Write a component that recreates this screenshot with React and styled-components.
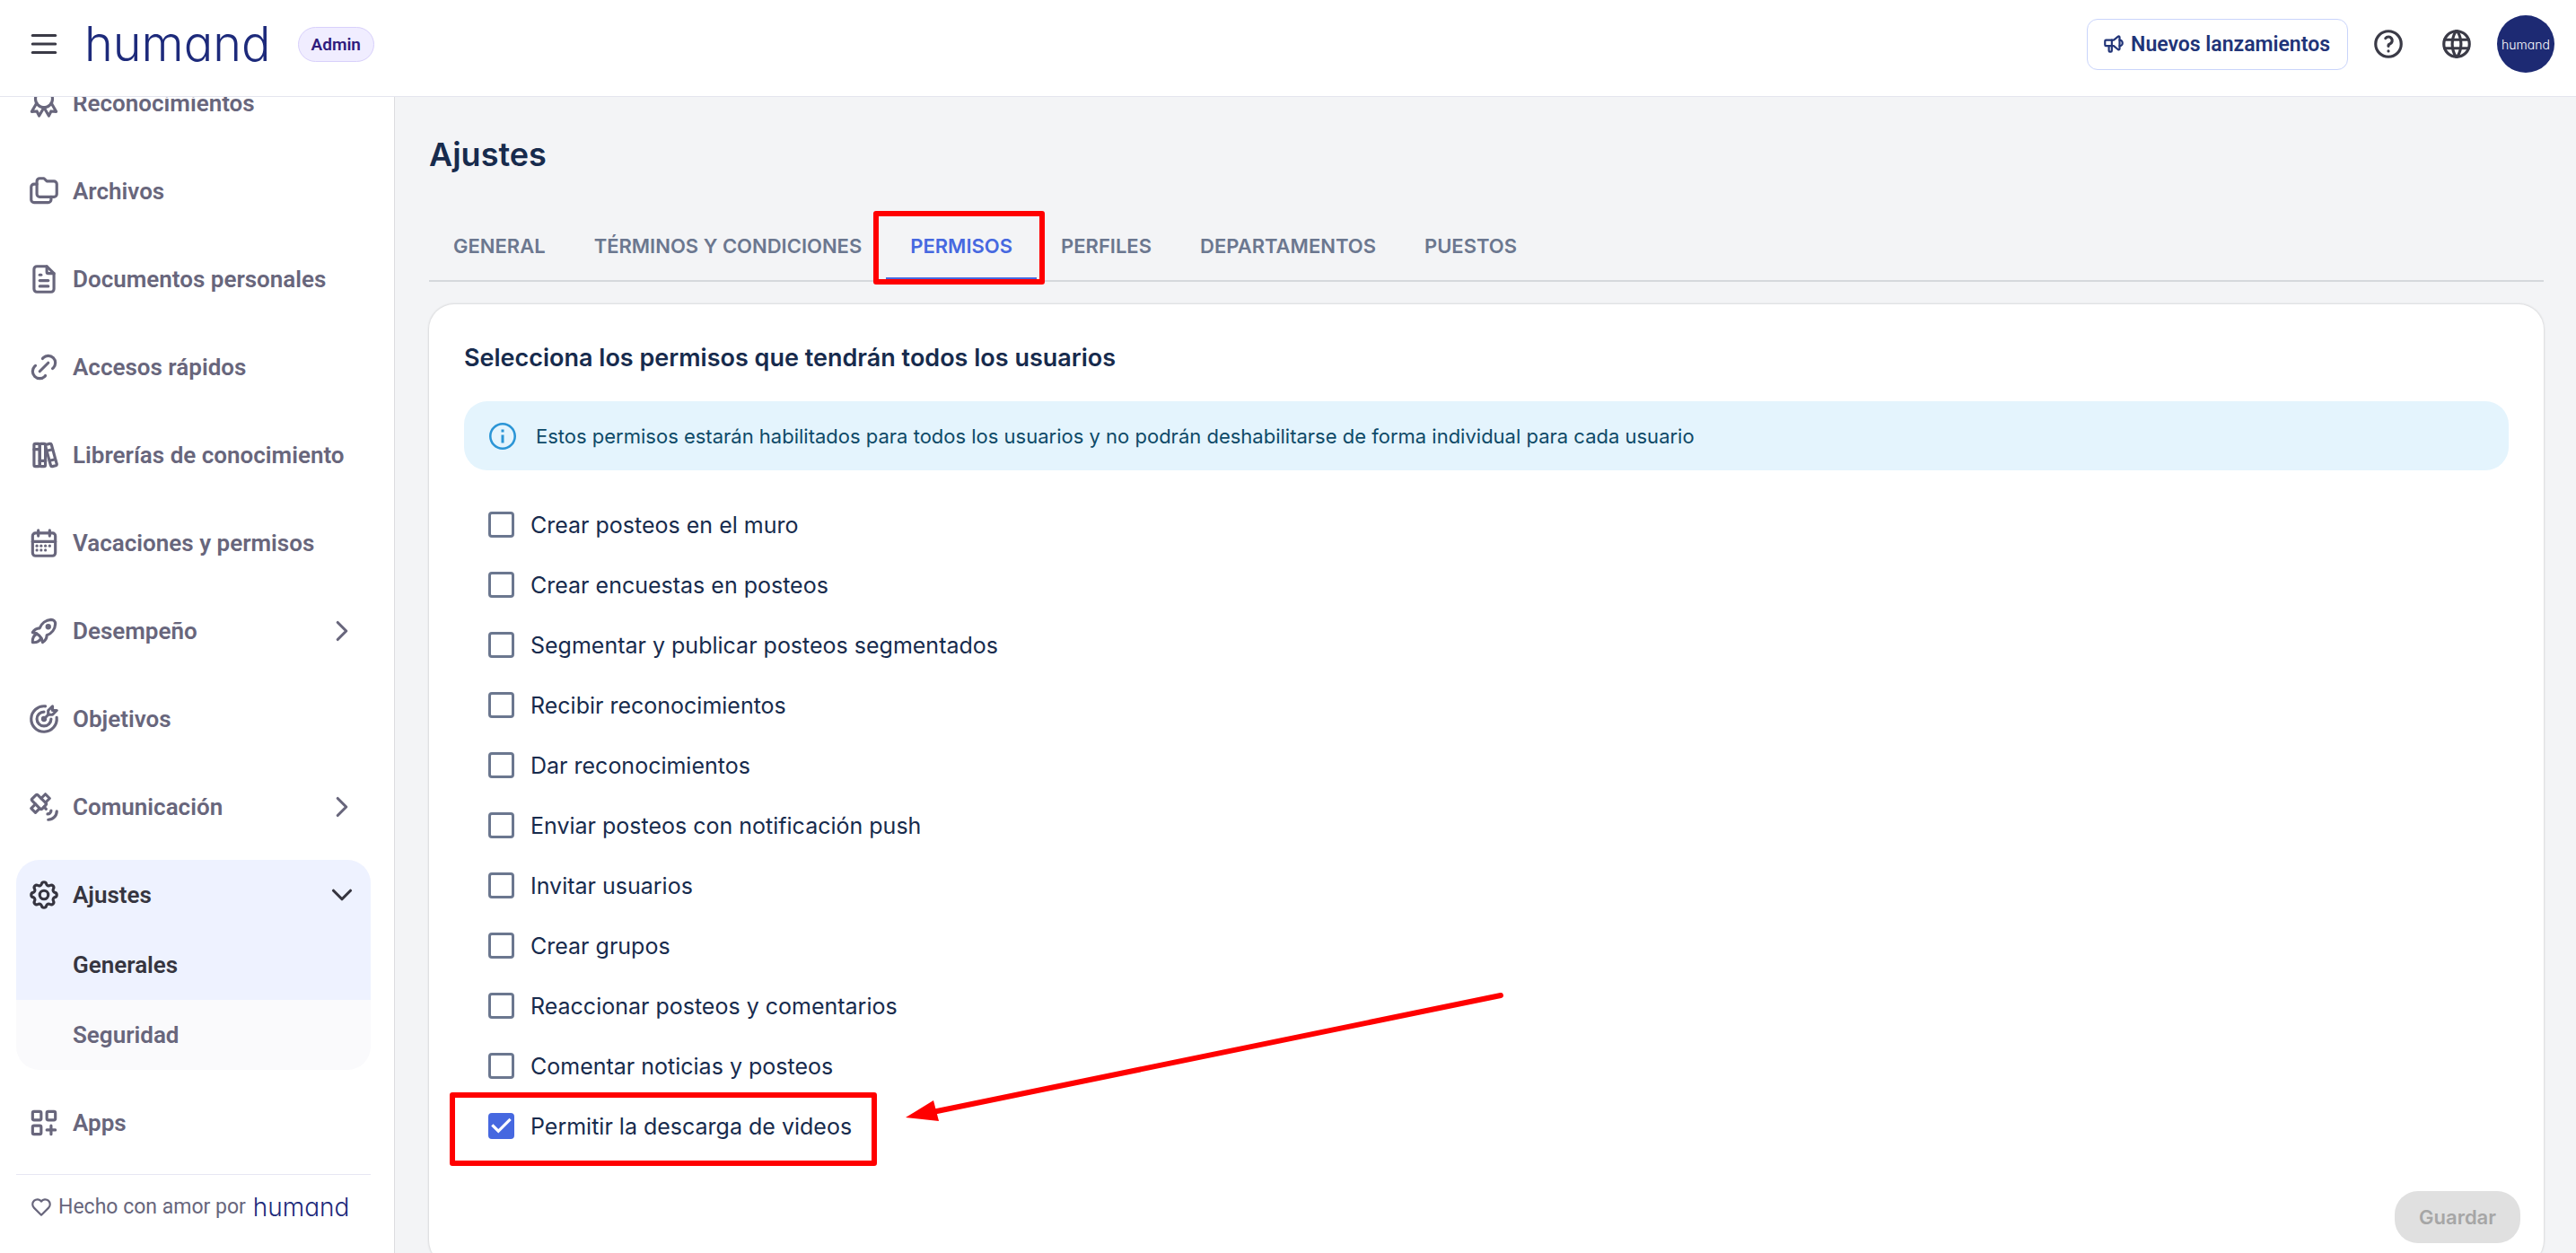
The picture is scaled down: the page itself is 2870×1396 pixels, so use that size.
import React, { useState } from 'react';
import styled, { createGlobalStyle, css } from 'styled-components';
import {
    TbAward, TbBooks, TbCalendarMonth, TbChevronDown, TbChevronRight, TbFileText, TbFolders,
    TbHeart, TbHelp, TbLayoutGridAdd, TbLink, TbMenu2, TbRocket, TbSatellite, TbSettings,
    TbSpeakerphone, TbTargetArrow, TbWorld,
} from 'react-icons/tb';

const menu = [
    { label: 'Reconocimientos', icon: TbAward },
    { label: 'Archivos', icon: TbFolders },
    { label: 'Documentos personales', icon: TbFileText },
    { label: 'Accesos rápidos', icon: TbLink },
    { label: 'Librerías de conocimiento', icon: TbBooks },
    { label: 'Vacaciones y permisos', icon: TbCalendarMonth },
    { label: 'Desempeño', icon: TbRocket, more: true },
    { label: 'Objetivos', icon: TbTargetArrow },
    { label: 'Comunicación', icon: TbSatellite, more: true },
    { label: 'Ajustes', icon: TbSettings, children: ['Generales', 'Seguridad'] },
    { label: 'Apps', icon: TbLayoutGridAdd },
];

const tabs = ['General', 'Términos y condiciones', 'Permisos', 'Perfiles', 'Departamentos', 'Puestos'];

const permissions = [
    'Crear posteos en el muro',
    'Crear encuestas en posteos',
    'Segmentar y publicar posteos segmentados',
    'Recibir reconocimientos',
    'Dar reconocimientos',
    'Enviar posteos con notificación push',
    'Invitar usuarios',
    'Crear grupos',
    'Reaccionar posteos y comentarios',
    'Comentar noticias y posteos',
    'Permitir la descarga de videos',
];

const highlightedTab = 'Permisos';
const highlightedPermission = 'Permitir la descarga de videos';

function Sidebar() {
    return (
        <SidebarBox>
            <Nav>
                <MenuList>
                    {menu.map(({ label, icon: Icon, more, children }) => (
                        <li key={label}>
                            {children ? (
                                <Group>
                                    <MenuButton $active aria-expanded="true">
                                        <Icon size={38} />
                                        <span>{label}</span>
                                        <TbChevronDown size={38} />
                                    </MenuButton>
                                    {children.map((child, i) => (
                                        <SubLink key={child} href="#" $active={i === 0}>{child}</SubLink>
                                    ))}
                                </Group>
                            ) : more ? (
                                <MenuButton aria-expanded="false">
                                    <Icon size={38} />
                                    <span>{label}</span>
                                    <TbChevronRight size={38} />
                                </MenuButton>
                            ) : (
                                <MenuLink href="#">
                                    <Icon size={38} />
                                    <span>{label}</span>
                                </MenuLink>
                            )}
                        </li>
                    ))}
                </MenuList>
            </Nav>
            <MadeWith>
                <TbHeart size={26} />
                <span>Hecho con amor por</span>
                <Wordmark $size={28}>humand</Wordmark>
            </MadeWith>
        </SidebarBox>
    )
}

function Permission({ label }) {
    const [checked, setChecked] = useState(label === highlightedPermission);
    return (
        <PermissionRow>
            <CheckLabel>
                <CheckSlot>
                    <Checkbox type="checkbox" checked={checked} onChange={() => setChecked(!checked)} />
                    {checked && (
                        <Tick viewBox="3 3 18 18" aria-hidden="true">
                            <path d="M10 17l-5-5 1.41-1.41L10 14.17l7.59-7.59L19 8z" fill="#fff" />
                        </Tick>
                    )}
                </CheckSlot>
                {label}
            </CheckLabel>
            {label === highlightedPermission && (
                <>
                    <RowMark />
                    <Arrow viewBox="0 0 668 146" aria-hidden="true">
                        <path d="M663 5L30 135" stroke="#f00" strokeWidth="6" strokeLinecap="round" />
                        <path d="M0 141L31 122L37 145Z" fill="#f00" />
                    </Arrow>
                </>
            )}
        </PermissionRow>
    )
}

function App() {
    return (
        <Shell>
            <GlobalStyle />
            <Header>
                <Brand>
                    <IconButton aria-label="Menú"><TbMenu2 size={38} /></IconButton>
                    <Wordmark $size={54}>humand</Wordmark>
                    <Badge>Admin</Badge>
                </Brand>
                <Actions>
                    <NewsButton>
                        <TbSpeakerphone size={26} />
                        Nuevos lanzamientos
                    </NewsButton>
                    <IconGroup>
                        <IconButton aria-label="Ayuda"><TbHelp size={38} /></IconButton>
                        <IconButton aria-label="Idioma"><TbWorld size={38} /></IconButton>
                    </IconGroup>
                    <Avatar aria-label="Perfil">
                        <Wordmark $size={14} $light>humand</Wordmark>
                    </Avatar>
                </Actions>
            </Header>
            <Body>
                <Sidebar />
                <Main>
                    <Title>Ajustes</Title>
                    <Tabs role="tablist">
                        {tabs.map((tab) => (
                            <Tab key={tab} role="tab" aria-selected={tab === highlightedTab} $active={tab === highlightedTab}>
                                {tab}
                                {tab === highlightedTab && <TabMark />}
                            </Tab>
                        ))}
                    </Tabs>
                    <Card>
                        <Section>
                            <Subtitle>Selecciona los permisos que tendrán todos los usuarios</Subtitle>
                            <Alert>
                                <svg width="36" height="36" viewBox="0 0 24 24" aria-hidden="true">
                                    <path
                                        fill="#2b95d6"
                                        d="M11 7h2v2h-2zM11 11h2v6h-2zM12 2C6.48 2 2 6.48 2 12s4.48 10 10 10 10-4.48 10-10S17.52 2 12 2zm0 18.300c-4.580 0-8.300-3.720-8.300-8.300S7.420 3.700 12 3.700s8.300 3.720 8.300 8.300-3.720 8.300-8.300 8.300z"
                                    />
                                </svg>
                                Estos permisos estarán habilitados para todos los usuarios y no podrán deshabilitarse de forma individual para cada usuario
                            </Alert>
                            <PermissionList>
                                {permissions.map((label) => <Permission key={label} label={label} />)}
                            </PermissionList>
                        </Section>
                        <CardFooter>
                            <SaveButton disabled>Guardar</SaveButton>
                        </CardFooter>
                    </Card>
                </Main>
            </Body>
        </Shell>
    )
}

const GlobalStyle = createGlobalStyle`
*{
    box-sizing: border-box;
}
body{
    margin: 0;
    font-family: Inter, "Liberation Sans", sans-serif;
    color: #172b4d;
}
button{
    font: inherit;
    color: inherit;
    border: 0;
    background: none;
    padding: 0;
    cursor: pointer;
}
svg{
    flex-shrink: 0;
}
`
const Shell = styled.div`
display: flex;
flex-direction: column;
height: 100vh;
overflow: hidden;
`
const Header = styled.header`
display: flex;
align-items: center;
justify-content: space-between;
flex-shrink: 0;
height: 108px;
padding: 0 24px 9px 30px;
background: #fff;
border-bottom: 1px solid #e4e5ee;
font-family: Roboto, "Liberation Sans", sans-serif;
`
const Brand = styled.div`
display: flex;
align-items: center;
`
/* cv11 is the single-storey "a" of Inter */
const Wordmark = styled.span`
font-family: Inter, "Liberation Sans", sans-serif;
font-feature-settings: "cv11";
font-weight: 300;
font-size: ${(props) => props.$size}px;
line-height: 1;
color: ${(props) => (props.$light ? '#fff' : '#1d2a7b')};
`
const Badge = styled.span`
margin-left: 30px;
padding: 0 14px;
line-height: 37px;
font-size: 19px;
font-weight: 600;
color: #2f1b7c;
background: #f0edff;
border: 1px solid #d8d0fb;
border-radius: 20px;
`
const Actions = styled.div`
display: flex;
align-items: center;
gap: 26px;
`
const IconGroup = styled.div`
display: flex;
gap: 38px;
`
const IconButton = styled.button`
display: flex;
color: #3a3a46;
${Brand} &{
    margin-right: 26px;
}
`
const NewsButton = styled.button`
display: flex;
align-items: center;
gap: 6px;
height: 57px;
padding: 0 19px 0 16px;
font-size: 23px;
font-weight: 600;
color: #213478;
border: 1px solid #c9d4fb;
border-radius: 12px;
`
const Avatar = styled.button`
width: 64px;
height: 64px;
border-radius: 50%;
background: #1d2a73;
`
const Body = styled.div`
display: flex;
flex: 1;
min-height: 0;
`
const SidebarBox = styled.aside`
display: flex;
flex-direction: column;
flex-shrink: 0;
width: 440px;
padding: 0 26px 0 18px;
background: #fff;
border-right: 1px solid #dcdce0;
font-family: Roboto, "Liberation Sans", sans-serif;
color: #68667c;
`
/* scrolled to the end: the first entries leave through the top */
const Nav = styled.nav`
display: flex;
flex-direction: column;
justify-content: flex-end;
flex: 1;
min-height: 0;
padding-bottom: 18px;
overflow: hidden;
`
const MenuList = styled.ul`
display: flex;
flex-direction: column;
flex-shrink: 0;
gap: 20px;
margin: 0;
padding: 0;
list-style: none;
`
const menuItem = css`
display: flex;
align-items: center;
gap: 13px;
width: 100%;
height: 78px;
padding: 0 13px 0 12px;
font-size: 26px;
font-weight: 600;
text-align: left;
text-decoration: none;
color: ${(props) => (props.$active ? '#363540' : '#68667c')};
background: ${(props) => (props.$active ? '#eef2ff' : 'transparent')};
span{
    flex: 1;
}
`
const MenuLink = styled.a`
${menuItem}
`
const MenuButton = styled.button`
${menuItem}
`
const SubLink = styled.a`
${menuItem}
padding-left: 63px;
`
const Group = styled.div`
overflow: hidden;
border-radius: 26px;
background: #fafafc;
`
const MadeWith = styled.div`
display: flex;
align-items: center;
height: 88px;
padding: 0 0 16px 15px;
border-top: 1px solid #e6e7f3;
font-size: 23px;
span + span{
    margin-left: 8px;
}
svg + span{
    margin-left: 6px;
}
`
const Main = styled.main`
flex: 1;
min-width: 0;
padding: 40px 36px 0 38px;
background: #f3f4f6;
overflow: hidden;
`
const Title = styled.h1`
margin: 0 0 40px;
font-size: 36px;
line-height: 48px;
font-weight: 600;
`
const Tabs = styled.div`
display: flex;
border-bottom: 2px solid #d5d8dc;
`
const Tab = styled.button`
position: relative;
height: 76px;
padding: 0 27px;
font-size: 22px;
font-weight: 600;
text-transform: uppercase;
color: ${(props) => (props.$active ? '#4668e0' : '#6b778f')};
box-shadow: ${(props) => (props.$active ? 'inset 0 -3px #4668e0' : 'none')};
`
const redFrame = css`
position: absolute;
border: 6px solid #f00;
border-radius: 3px;
pointer-events: none;
`
const TabMark = styled.span`
${redFrame}
inset: -1px -9px -5px -14px;
`
const Card = styled.section`
margin-top: 25px;
background: #fff;
border-radius: 28px;
box-shadow: 0 0 2px 1px rgb(0 0 0 / 10%);
`
const Section = styled.div`
padding: 40px 39px 0;
`
const Subtitle = styled.h2`
margin: 0 0 28px;
font-size: 27px;
line-height: 40px;
font-weight: 600;
`
const Alert = styled.div`
display: flex;
align-items: center;
gap: 19px;
min-height: 77px;
padding: 0 25px;
font-size: 22px;
color: #0e4a68;
background: #e4f4fd;
border-radius: 26px;
`
const PermissionList = styled.ul`
margin: 27px 0 0;
padding: 0 0 0 27px;
list-style: none;
`
const PermissionRow = styled.li`
position: relative;
display: flex;
align-items: center;
height: 67px;
`
const CheckLabel = styled.label`
display: flex;
align-items: center;
gap: 18px;
font-size: 25px;
`
const CheckSlot = styled.span`
display: grid;
`
const Checkbox = styled.input`
appearance: none;
grid-area: 1 / 1;
width: 29px;
height: 29px;
margin: 0;
border: 3px solid #6b778f;
border-radius: 4px;
&:checked{
    border-color: #4668e0;
    background: #4668e0;
}
`
const Tick = styled.svg`
grid-area: 1 / 1;
width: 29px;
height: 29px;
pointer-events: none;
`
const RowMark = styled.span`
${redFrame}
left: -43px;
top: -4px;
width: 476px;
height: 82px;
`
const Arrow = styled.svg`
position: absolute;
left: 465px;
top: -117px;
width: 668px;
height: 146px;
fill: none;
pointer-events: none;
`
const CardFooter = styled.div`
display: flex;
justify-content: flex-end;
padding: 39px 26px 25px;
`
const SaveButton = styled.button`
height: 58px;
padding: 0 27px;
font-size: 22px;
font-weight: 600;
border-radius: 26px;
&:disabled{
    color: #a6a6a6;
    background: #e0e0e0;
    cursor: default;
}
`
export default App
